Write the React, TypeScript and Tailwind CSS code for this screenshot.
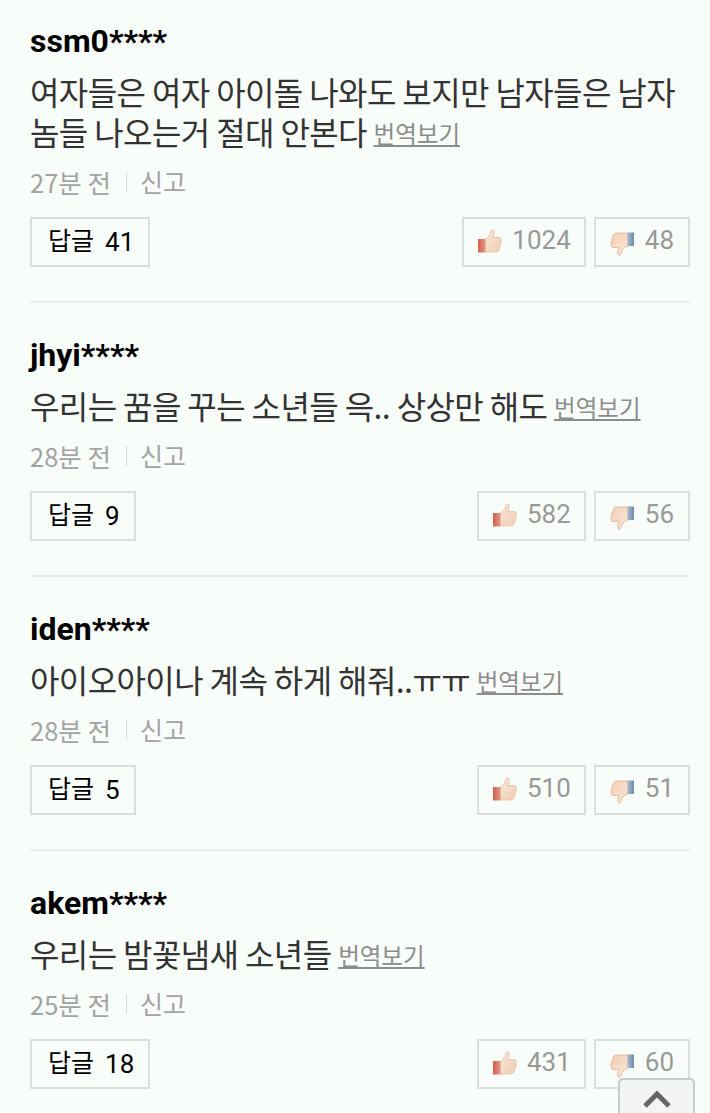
const comments = [
  { name: "ssm0****", lines: "여자들은 여자 아이돌 나와도 보지만 남자들은 남자 놈들 나오는거 절대 안본다", time: "27분 전", replies: 41, up: 1024, down: 48 },
  { name: "jhyi****", lines: "우리는 꿈을 꾸는 소년들 윽.. 상상만 해도", time: "28분 전", replies: 9, up: 582, down: 56 },
  { name: "iden****", lines: "아이오아이나 계속 하게 해줘..ㅠㅠ", time: "28분 전", replies: 5, up: 510, down: 51 },
  { name: "akem****", lines: "우리는 밤꽃냄새 소년들", time: "25분 전", replies: 18, up: 431, down: 60 },
];

const ThumbUp = () => (
  <svg width="24" height="24" viewBox="0 0 24 24" className="shrink-0">
    <defs>
      <linearGradient id="upSkin" x1="0" y1="0" x2="1" y2="1">
        <stop offset="0" stopColor="#f9e7d8" />
        <stop offset="1" stopColor="#f0cdb4" />
      </linearGradient>
      <linearGradient id="upCuff" x1="0" y1="0" x2="1" y2="0">
        <stop offset="0" stopColor="#d0604c" />
        <stop offset="1" stopColor="#e39a84" />
      </linearGradient>
    </defs>
    <path d="M7 10.5 C9.5 9 11 7.5 12 5 C12.6 3.2 13 1.5 13.8 0.8 C15.6 0.4 16.6 2 16 4.5 L15.2 8.5 L21.5 8.5 C23.6 9 23.7 11 22.8 12 C23.6 13.5 23.2 15 22.2 15.6 C22.6 17 22.2 18.5 21.2 19 C21.4 21 20.4 22.6 18.5 22.8 L10 23 L7 23 Z" fill="url(#upSkin)" stroke="#e3bda2" strokeWidth="0.8" />
    <rect x="0" y="10" width="7.5" height="13.5" fill="url(#upCuff)" />
  </svg>
);

const ThumbDown = () => (
  <svg width="24" height="24" viewBox="0 0 24 24" className="mt-[7px] shrink-0">
    <defs>
      <linearGradient id="downSkin" x1="0" y1="0" x2="1" y2="1">
        <stop offset="0" stopColor="#f3cfb4" />
        <stop offset="1" stopColor="#f9e7d8" />
      </linearGradient>
      <linearGradient id="downCuff" x1="0" y1="0" x2="1" y2="0">
        <stop offset="0" stopColor="#a9bccd" />
        <stop offset="1" stopColor="#7089a8" />
      </linearGradient>
    </defs>
    <path d="M18 14 C15 15 13 16.5 12 18.5 C11.2 20.5 10.8 22.4 10 23.2 C8.2 23.6 7.2 22 7.8 19.5 L8.6 15.5 L3 15.5 C1 15 0.6 13 1.4 12 C0.6 10.5 1 9 2 8.4 C1.6 7 2.2 5.5 3 5 C3 3 4 1.4 5.8 1.2 L14 1 L18 1 Z" fill="url(#downSkin)" stroke="#dfae8d" strokeWidth="0.8" />
    <rect x="17.5" y="0.5" width="6.5" height="13.5" fill="url(#downCuff)" />
  </svg>
);

export default function App() {
  return (
    <div className="relative h-[1113px] overflow-hidden bg-[#f9fdf9] pr-[20px] pl-[30px] font-['Noto_Sans_CJK_KR',sans-serif]">
      {comments.map((c) => (
        <div key={c.name} className="h-[274px] border-b-2 border-[#e9edea] pt-[32px] first:h-[303px] first:pt-[21px]">
          <div className="h-10 font-['Roboto','Noto_Sans_CJK_KR',sans-serif] text-[32px] leading-10 font-bold text-black">{c.name}</div>
          <p className="mt-[10px] text-[32px] leading-10 tracking-[-0.6px] text-[#333]">
            {c.lines} <a className="align-[2px] text-[23.5px] leading-none tracking-normal text-[#8c8c8c] underline">번역보기</a>
          </p>
          <div className="mt-[11px] flex h-10 items-center text-[25.5px] text-[#a3a3a3]">
            <span>{c.time}</span>
            <span className="mr-[13px] ml-[15px] h-[20px] w-px bg-[#d8dcd9]" />
            <span className="text-[25px]">신고</span>
          </div>
          <div className="mt-[15px] flex justify-between">
            <button className="flex h-[50px] items-center gap-[11px] border-2 border-[#dadfdb] pr-[14px] pl-[16px] font-['Roboto','Noto_Sans_CJK_KR',sans-serif] text-[25px] text-black">
              <span>답글</span>
              <span className="text-[26px]">{c.replies}</span>
            </button>
            <div className="flex gap-[8px]">
              <div className="flex h-[50px] items-center gap-[10px] border-2 border-[#dadfdb] pr-[13px] pb-[3px] pl-[14px] font-['Roboto',sans-serif] text-[26px] text-[#999]">
                <ThumbUp />
                <span>{c.up}</span>
              </div>
              <div className="flex h-[50px] items-center gap-[11px] border-2 border-[#dadfdb] px-[14px] pb-[3px] font-['Roboto',sans-serif] text-[26px] text-[#999]">
                <ThumbDown />
                <span>{c.down}</span>
              </div>
            </div>
          </div>
        </div>
      ))}
      <div className="absolute right-[15px] bottom-[-6px] flex h-[41px] w-[77px] items-start justify-center rounded-t-[5px] border-2 border-[#c9cdca] bg-[#f3f5f3] pt-[10px]">
        <svg width="30" height="18" viewBox="0 0 30 18">
          <path d="M3 16 L15 4 L27 16" fill="none" stroke="#666" strokeWidth="5" />
        </svg>
      </div>
    </div>
  );
}
